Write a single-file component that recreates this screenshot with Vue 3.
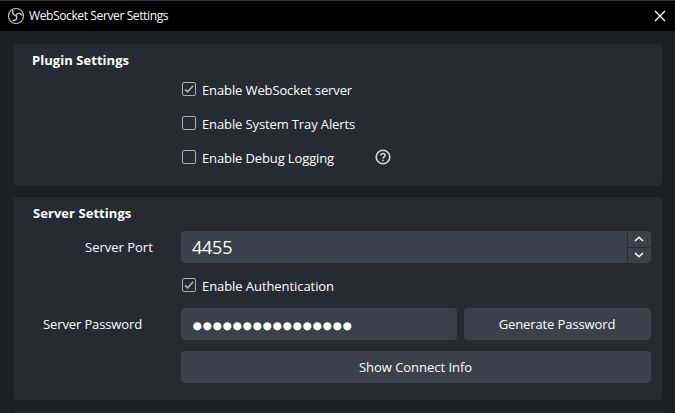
<script setup>
import { ref } from 'vue'

const plugin = ref([
  { label: 'Enable WebSocket server', on: true },
  { label: 'Enable System Tray Alerts', on: false },
  { label: 'Enable Debug Logging', on: false, help: true },
])
const auth = ref(true)
const port = ref(4455)
const password = '●'.repeat(16)
</script>

<template>
  <div class="window">
    <header class="titlebar">
      <svg class="logo" width="18" height="18" viewBox="0 0 18 18">
        <g fill="none" stroke="#c8c8c8">
          <circle cx="9" cy="9" r="7.5" stroke-width="1.2" />
          <g stroke-width="1.5" stroke-linecap="round">
            <path d="M8.8 8.6C6.5 8 5.1 6.1 5.8 3.6" />
            <path d="M9 8.6C9.8 6 12.6 5.5 14.8 7.9" />
            <path d="M9 8.6C10.9 11.2 9.4 13.6 6.2 13.4" />
          </g>
        </g>
      </svg>
      <span class="title">WebSocket Server Settings</span>
      <svg class="close" width="12" height="12" viewBox="0 0 12 12">
        <path d="M1 1L11 11M11 1L1 11" stroke="#fff" stroke-width="1.3" />
      </svg>
    </header>

    <main class="content">
      <section class="panel plugin">
        <h2>Plugin Settings</h2>
        <div v-for="item in plugin" :key="item.label" class="check-row" @click="item.on = !item.on">
          <span class="box">
            <svg v-if="item.on" width="12" height="12" viewBox="0 0 12 12"><path d="M2 6.4L4.6 8.9L10.2 2.8" /></svg>
          </span>
          <span class="label">{{ item.label }}</span>
          <svg v-if="item.help" class="help" width="16" height="16" viewBox="0 0 16 16">
            <circle cx="8" cy="8" r="6.8" />
            <path d="M5.9 6.5C5.9 3.8 10.1 3.9 10.1 6.4C10.1 7.9 8 7.8 8 9.6" />
            <path d="M8 10.7V12.2" />
          </svg>
        </div>
      </section>

      <section class="panel server">
        <h2>Server Settings</h2>
        <div class="row">
          <span class="name port-name">Server Port</span>
          <div class="field spin">
            <span class="value">{{ port }}</span>
            <div class="steps">
              <button @click="port++"><svg width="10" height="6" viewBox="0 0 10 6"><path d="M1 5L5 1.2L9 5" /></svg></button>
              <button @click="port--"><svg width="10" height="6" viewBox="0 0 10 6"><path d="M1 1L5 4.8L9 1" /></svg></button>
            </div>
          </div>
        </div>
        <div class="check-row auth" @click="auth = !auth">
          <span class="box">
            <svg v-if="auth" width="12" height="12" viewBox="0 0 12 12"><path d="M2 6.4L4.6 8.9L10.2 2.8" /></svg>
          </span>
          <span class="label">Enable Authentication</span>
        </div>
        <div class="row">
          <span class="name">Server Password</span>
          <div class="field password">{{ password }}</div>
          <button class="btn generate">Generate Password</button>
        </div>
        <div class="row last">
          <button class="btn show">Show Connect Info</button>
        </div>
      </section>

      <section class="panel next"></section>
    </main>
  </div>
</template>

<style>
body { background: #1e2028; overflow: hidden; }
</style>

<style scoped>
* { box-sizing: border-box; }
.window {
  width: 675px;
  height: 413px;
  overflow: hidden;
  background: #1d1f27;
  color: #fefefe;
  font: 13px/18px "Open Sans", sans-serif;
}
.titlebar {
  display: flex;
  align-items: center;
  height: 31px;
  padding: 0 9px 0 7px;
  border-top: 1px solid #333;
  background: #000;
}
.title {
  margin-left: 4px;
  font: 12px/16px "Open Sans", sans-serif;
  letter-spacing: -0.38px;
  white-space: nowrap;
}
.close { margin-left: auto; }
.content {
  display: flex;
  flex-direction: column;
  gap: 11px;
  padding: 13px 13px 0;
}
.panel {
  flex: none;
  border-radius: 4px;
  background: #272a33;
}
.plugin { height: 142px; padding: 7px 0 0 19px; }
.server { height: 203px; padding: 7px 11px 0 20px; }
.next { height: 40px; }
h2 { margin: 0; font-size: 13px; line-height: 18px; font-weight: 700; letter-spacing: 0.05px; white-space: nowrap; }
.check-row {
  display: flex;
  align-items: center;
  height: 34px;
  padding-left: 150px;
}
.plugin h2 + .check-row { margin-top: 3px; }
.box {
  display: flex;
  flex: none;
  width: 14px;
  height: 14px;
  border: 1px solid #aeb0b5;
  border-radius: 2px;
}
.box path { fill: none; stroke: #b2b3b8; stroke-width: 1.6; }
.label { padding: 2px 0 0 6px; letter-spacing: -0.12px; white-space: nowrap; }
.auth .label { letter-spacing: -0.07px; }
.help { margin-left: 41px; fill: none; stroke: #d6d6d8; stroke-width: 1.6; }
.row { display: flex; align-items: center; height: 32px; }
h2 + .row { margin-top: 9px; }
.name { width: 148px; padding-left: 10px; letter-spacing: -0.12px; white-space: nowrap; }
.port-name { padding-left: 52px; letter-spacing: 0; }
.field, .btn {
  height: 32px;
  border: 0;
  border-radius: 4px;
  background: #3c404b;
  color: #fefefe;
}
.spin { display: flex; width: 470px; }
.value { flex: 1; padding-left: 11px; font-size: 18px; line-height: 33px; letter-spacing: -0.25px; }
.steps {
  display: flex;
  flex-direction: column;
  width: 24px;
  margin: 1px 0;
  padding-right: 1px;
  border-left: 1px solid #272a33;
}
.steps button {
  display: flex;
  flex: 1;
  align-items: center;
  justify-content: center;
  padding: 0;
  border: 0;
  background: none;
}
.steps button + button { border-top: 1px solid #272a33; }
.steps path { fill: none; stroke: #fefefe; stroke-width: 1.5; }
.auth { height: 43px; margin-bottom: 2px; padding-left: 149px; }
.password {
  width: 276px;
  padding-left: 11.5px;
  font: 10.5px/35px "DejaVu Sans", sans-serif;
  letter-spacing: 0.83px;
  white-space: nowrap;
}
.btn { padding: 0; font: 13px/32px "Open Sans", sans-serif; letter-spacing: -0.08px; text-align: center; }
.generate { width: 187px; margin-left: 7px; padding-right: 1px; letter-spacing: -0.11px; }
.last { margin-top: 11px; justify-content: flex-end; }
.show { width: 470px; padding-right: 1px; letter-spacing: -0.03px; }
</style>
